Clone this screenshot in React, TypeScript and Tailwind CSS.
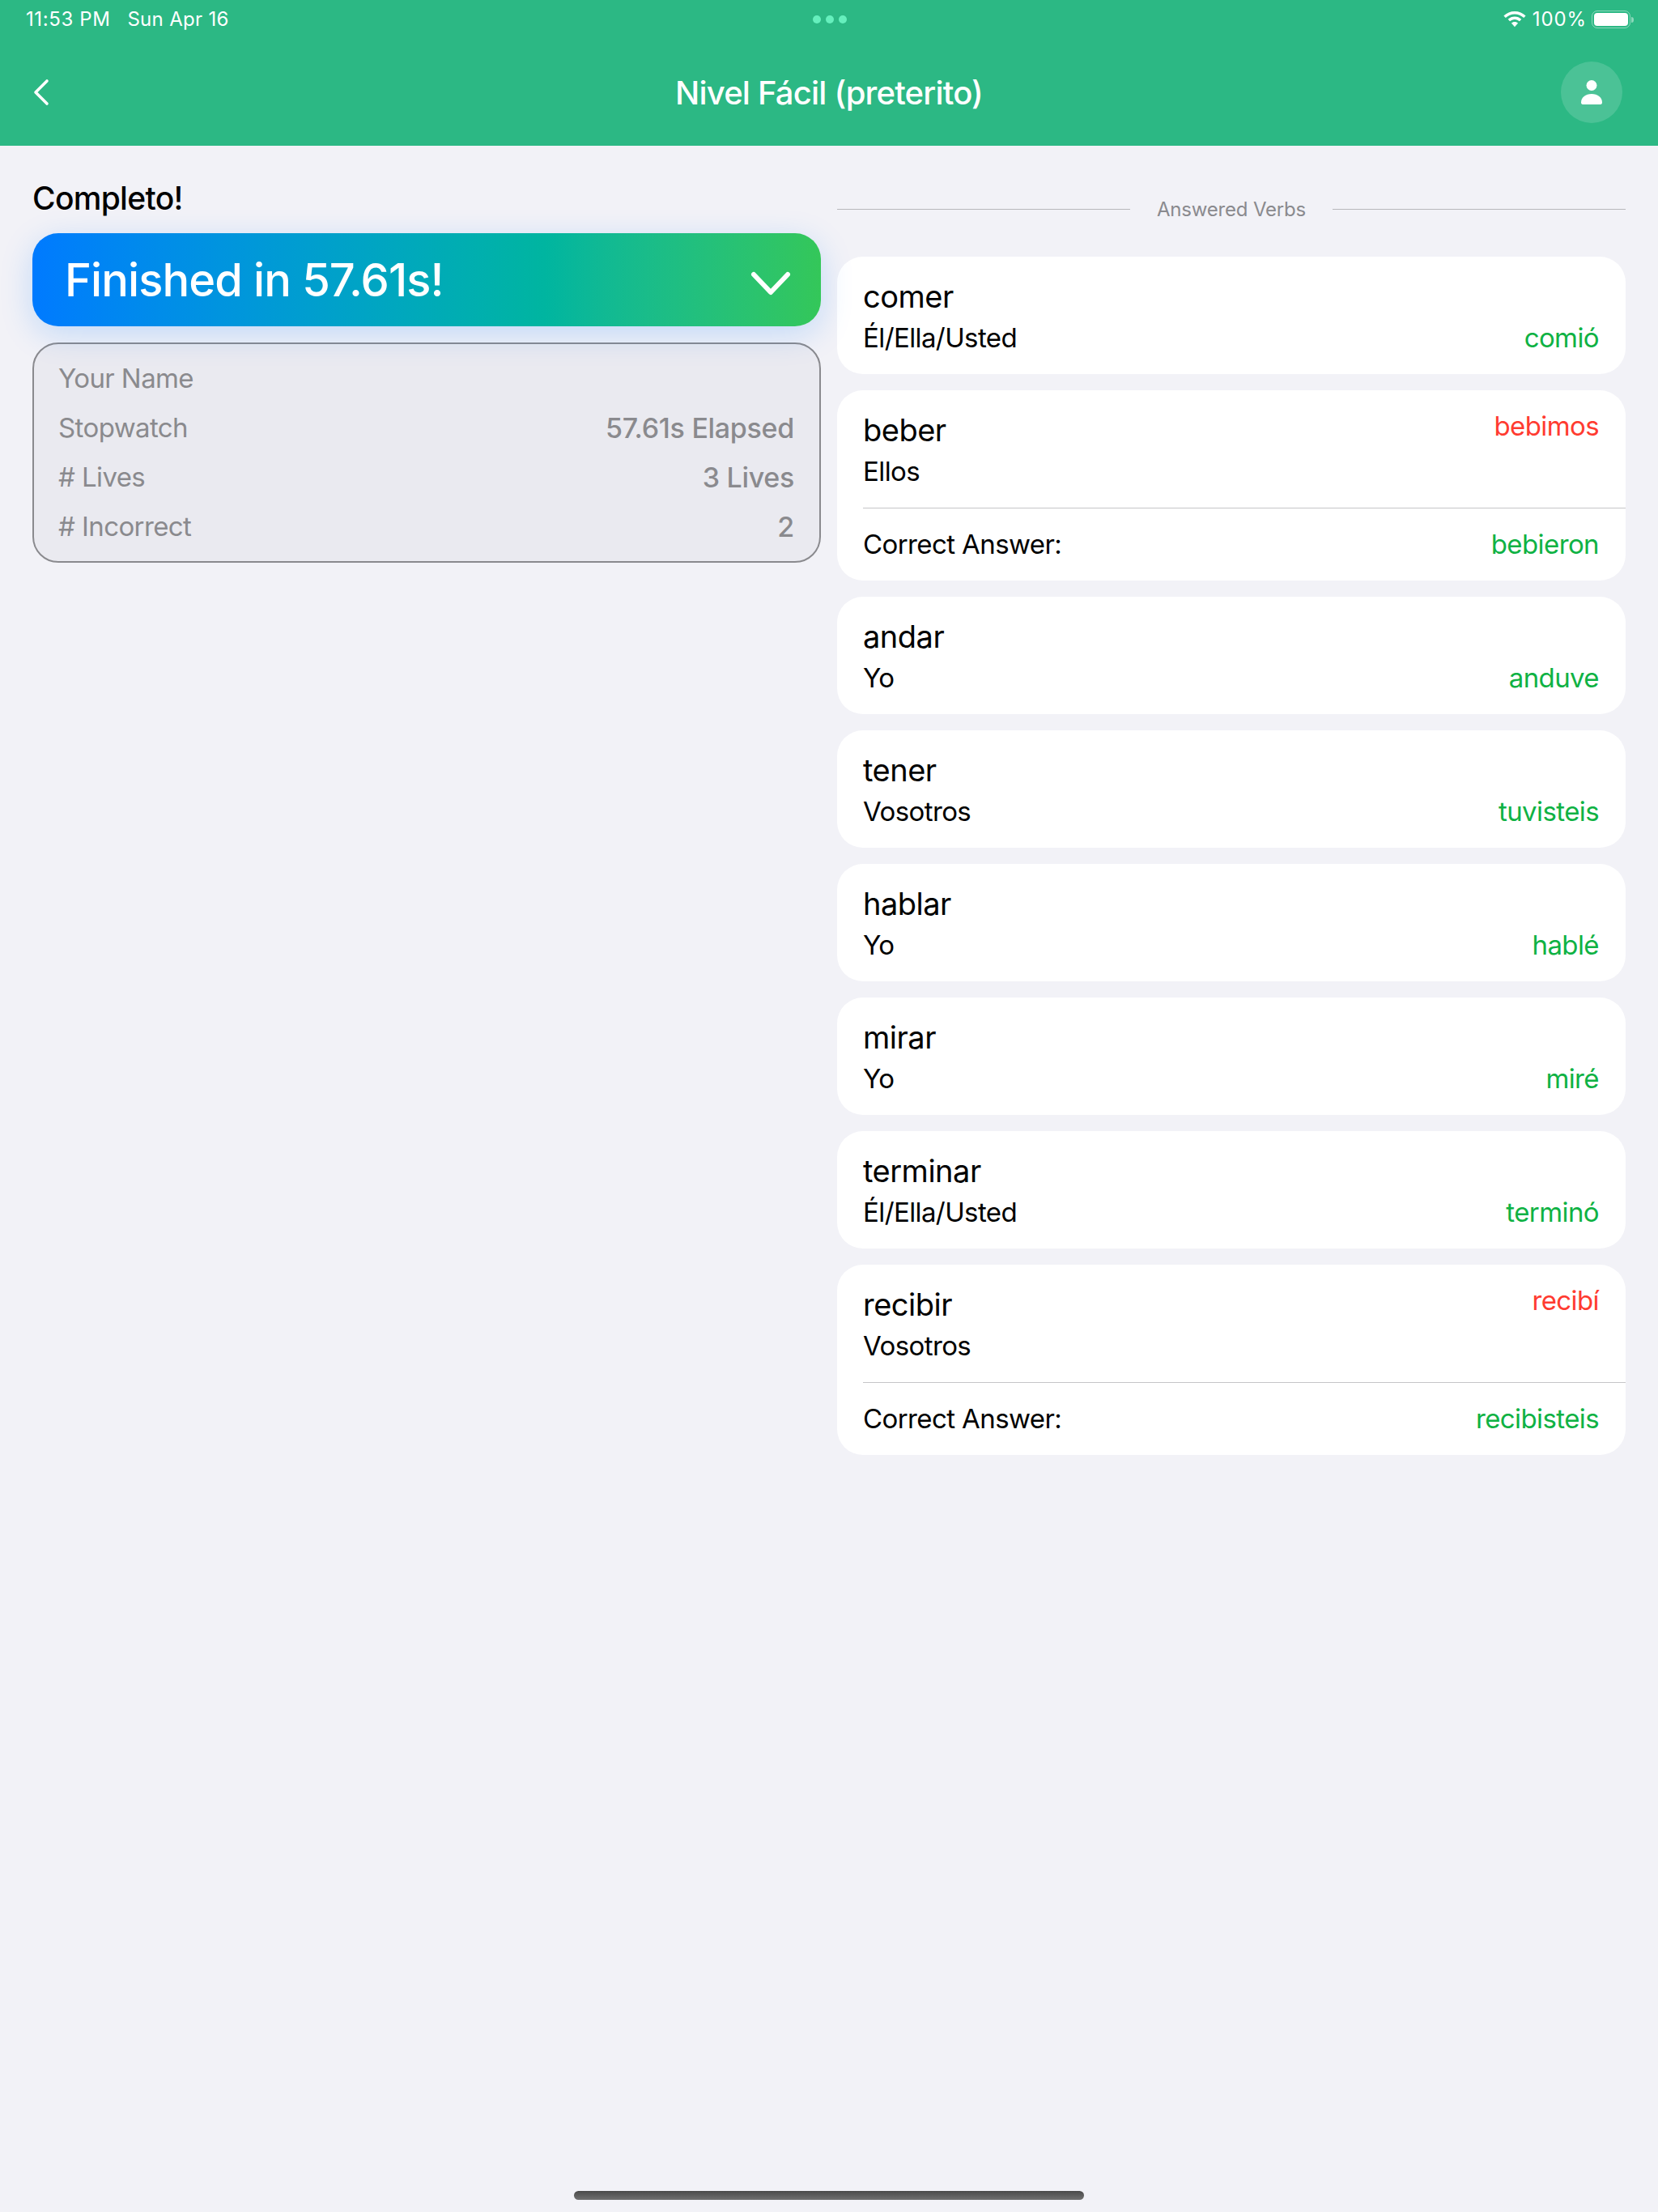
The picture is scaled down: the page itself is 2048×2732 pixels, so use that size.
import React from 'react';

interface Verb {
  verb: string;
  pronoun: string;
  answer: string;
  correct?: string;
}

const verbs: Verb[] = [
  { verb: 'comer', pronoun: 'Él/Ella/Usted', answer: 'comió' },
  { verb: 'beber', pronoun: 'Ellos', answer: 'bebimos', correct: 'bebieron' },
  { verb: 'andar', pronoun: 'Yo', answer: 'anduve' },
  { verb: 'tener', pronoun: 'Vosotros', answer: 'tuvisteis' },
  { verb: 'hablar', pronoun: 'Yo', answer: 'hablé' },
  { verb: 'mirar', pronoun: 'Yo', answer: 'miré' },
  { verb: 'terminar', pronoun: 'Él/Ella/Usted', answer: 'terminó' },
  { verb: 'recibir', pronoun: 'Vosotros', answer: 'recibí', correct: 'recibisteis' },
];

const stats = [
  { label: 'Your Name', value: '' },
  { label: 'Stopwatch', value: '57.61s Elapsed' },
  { label: '# Lives', value: '3 Lives' },
  { label: '# Incorrect', value: '2' },
];

const StatusBar = () => (
  <div className="h-[48px] flex items-center justify-between pl-[32px] pr-[30px] text-[24px] text-white">
    <div className="w-[400px] flex gap-[21px] tracking-[0.3px]">
      <span className="tracking-[0.6px]">11:53 PM</span>
      <span>Sun Apr 16</span>
    </div>
    <div className="flex gap-[6px]">
      <span className="w-[10px] h-[10px] rounded-full bg-[#66efbd]"></span>
      <span className="w-[10px] h-[10px] rounded-full bg-[#66efbd]"></span>
      <span className="w-[10px] h-[10px] rounded-full bg-[#66efbd]"></span>
    </div>
    <div className="w-[400px] flex items-center justify-end gap-[6px]">
      <svg width="28" height="20" viewBox="0 0 28 20" fill="white" className="mr-[2px]">
        <path d="M14 0C8.700 0 4 2 .400 5.500L2.800 8.100C5.800 5.100 9.700 3.400 14 3.400S22.200 5.100 25.200 8.100L27.600 5.500C24 2 19.300 0 14 0Z" />
        <path d="M14 6.500C10.800 6.500 7.900 7.700 5.700 9.800L8 12.300C9.600 10.800 11.700 9.900 14 9.900S18.400 10.800 20 12.300L22.300 9.800C20.100 7.700 17.200 6.500 14 6.500Z" />
        <path d="M14 13C12.400 13 11 13.600 9.900 14.600L14 19.300L18.100 14.600C17 13.600 15.600 13 14 13Z" />
      </svg>
      <span className="tracking-[0.9px]">100%</span>
      <div className="flex items-center gap-[1px]">
        <div className="w-[48px] h-[22px] rounded-[7px] border-[1.5px] border-white/45 p-[2px]">
          <div className="w-full h-full rounded-[4px] bg-white"></div>
        </div>
        <div className="w-[3px] h-[7px] rounded-r-full bg-white/45"></div>
      </div>
    </div>
  </div>
);

const Header = () => (
  <div className="h-[180px] bg-[#2cb884] shrink-0">
    <StatusBar />
    <div className="h-[132px] flex items-center pl-[40px] pr-[44px]">
      <div className="flex-1">
        <svg width="22" height="34" viewBox="0 0 22 34" fill="none" stroke="white" strokeWidth="3.600" strokeLinecap="round" strokeLinejoin="round">
          <path d="M18 3L4 17L18 31" />
        </svg>
      </div>
      <h1 className="ml-[4px] pt-[2px] text-[40px] font-medium text-white tracking-[-0.8px]">Nivel Fácil (preterito)</h1>
      <div className="flex-1 flex justify-end">
        <div className="w-[76px] h-[76px] rounded-full bg-white/15 flex items-center justify-center">
          <svg width="26" height="30" viewBox="0 0 26 30" fill="white">
            <circle cx="13" cy="6.500" r="6.500" />
            <path d="M0 27.500C0 21.500 5.500 17 13 17S26 21.500 26 27.500C26 29 25.200 30 24 30H2C.800 30 0 29 0 27.500Z" />
          </svg>
        </div>
      </div>
    </div>
  </div>
);

const Summary = () => (
  <div className="flex-1 min-w-0">
    <h2 className="text-[39px] leading-[48px] mt-[41px] font-medium text-black tracking-[-0.7px]">Completo!</h2>
    <div className="relative mt-[19px] h-[115px] rounded-[32px] bg-gradient-to-r from-[#007aff] via-[#00b5a0] via-65% to-[#34c759] shadow-[0_10px_40px_rgba(0,122,255,0.2)] flex items-center justify-between pl-[40px] pr-[36px]">
      <span className="text-[56px] font-medium text-white tracking-[-0.9px]">Finished in 57.61s!</span>
      <svg width="52" height="32" viewBox="0 0 52 32" fill="none" stroke="white" strokeWidth="6" strokeLinecap="round" strokeLinejoin="round" className="mt-[9px]">
        <path d="M5 5L26 27L47 5" />
      </svg>
    </div>
    <div className="mt-[20px] h-[272px] rounded-[32px] border-2 border-[#8a8a8e] bg-[#767680]/6 flex flex-col justify-center pl-[30px] pr-[31px] text-[33px] text-[#8a8a8e] tracking-[-0.6px]">
      {stats.map((s) => (
        <div key={s.label} className="h-[61px] flex items-center justify-between">
          <span>{s.label}</span>
          <span className="font-medium text-[34px] tracking-[-0.3px]">{s.value}</span>
        </div>
      ))}
    </div>
  </div>
);

const VerbCard = ({ verb, pronoun, answer, correct }: Verb) => (
  <div className="bg-white rounded-[32px] overflow-hidden text-black">
    <div className="relative h-[145px] pl-[32px] pr-[33px]">
      <div className="pt-[24px] text-[38px] leading-[50px] tracking-[-0.5px]">{verb}</div>
      <div className="flex items-center justify-between mt-[1px] text-[33px] leading-[50px] tracking-[-0.6px]">
        <span>{pronoun}</span>
        {!correct && <span className="text-[#0fb244]">{answer}</span>}
      </div>
      {correct && (
        <span className="absolute right-[33px] top-[19px] text-[33px] leading-[50px] tracking-[-0.6px] text-[#ff3b30]">{answer}</span>
      )}
    </div>
    {correct && (
      <div className="ml-[32px] h-[90px] border-t border-[#c6c6c8] flex items-center justify-between pr-[33px] text-[33px] tracking-[-0.6px]">
        <span>Correct Answer:</span>
        <span className="text-[#0fb244]">{correct}</span>
      </div>
    )}
  </div>
);

const AnsweredVerbs = () => (
  <div className="flex-1 min-w-0">
    <div className="mt-[53px] mb-[34px] h-[50px] flex items-center">
      <div className="flex-1 h-px bg-[#b8b8bc]"></div>
      <span className="px-[33px] pt-[2px] text-[24px] text-[#8a8a8e] tracking-[-0.2px]">Answered Verbs</span>
      <div className="flex-1 h-px bg-[#b8b8bc]"></div>
    </div>
    <div className="flex flex-col gap-[20px]">
      {verbs.map((v) => (
        <VerbCard key={v.verb} {...v} />
      ))}
    </div>
  </div>
);

export default function App() {
  return (
    <div className="w-[2048px] h-[2732px] bg-[#f2f2f7] flex flex-col font-['Inter',sans-serif]">
      <Header />
      <div className="flex-1 flex gap-[20px] px-[40px]">
        <Summary />
        <AnsweredVerbs />
      </div>
      <div className="h-[26px] flex justify-center shrink-0">
        <div className="w-[630px] h-[11px] rounded-full bg-gradient-to-b from-[#4a4a4a] to-[#707070]"></div>
      </div>
    </div>
  );
}
